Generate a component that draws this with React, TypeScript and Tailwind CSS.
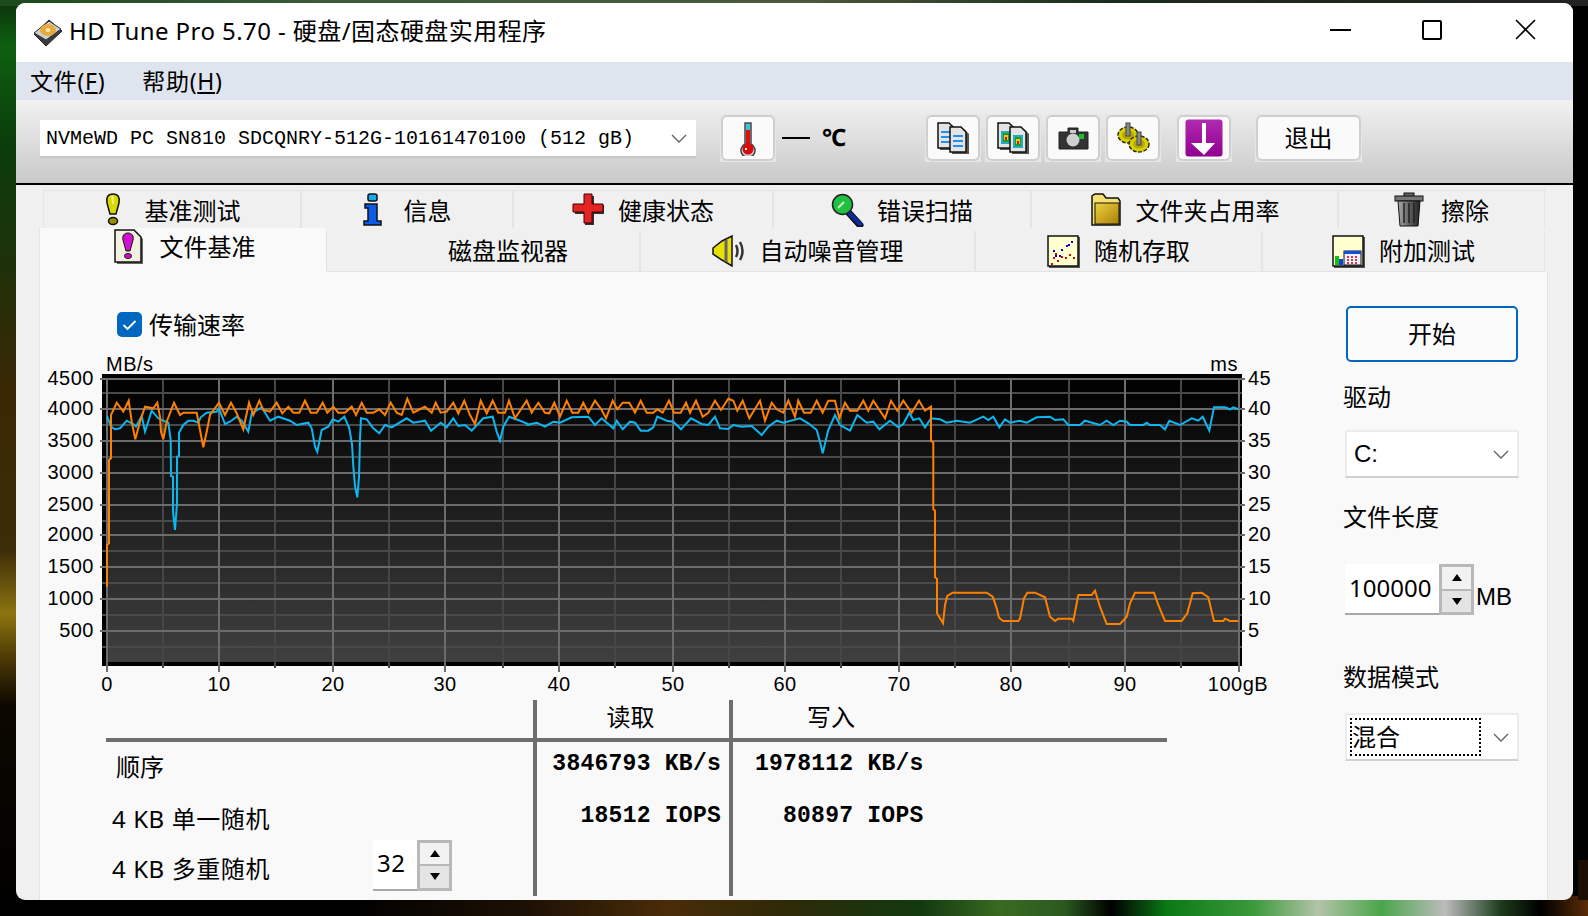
import React from 'react';

const CJK = "font-['Noto_Sans','Noto_Sans_CJK_SC',sans-serif]";

// points read off the reference, in 3x crop coordinates
function toPts(ox: number, list: number[][]) {
  return list.map(([x, y]) => `${(ox + x / 3).toFixed(1)},${(350 + y / 3).toFixed(1)}`).join(' ');
}

const orange = [
  toPts(30, [[231,710],[231,585],[237,580],[237,330],[243,325],[243,195],[260,158],[280,185],[296,152],[305,215],[316,268],[330,215],[345,170],[370,175],[382,158],[390,200],[393,245],[400,268],[410,215],[432,158],[450,195],[460,188],[500,188],[510,240],[520,292],[530,245],[540,195],[567,158],[585,195],[603,158],[620,190],[640,238],[657,158],[670,195],[688,152],[700,180],[720,185],[740,158],[757,190],[775,170],[790,188],[808,188],[825,152],[842,188],[860,188],[878,158],[892,188],[910,170],[925,188],[945,188],[965,170],[978,195],[995,158],[1010,188],[1030,188],[1048,178],[1065,195],[1082,158],[1100,188],[1115,195],[1132,146],[1150,188],[1165,180],[1185,170],[1205,188],[1217,158],[1232,188],[1250,185],[1270,158],[1285,190],[1303,152],[1320,195],[1335,222],[1352,152],[1370,190],[1388,152],[1405,188],[1425,188],[1437,152],[1455,205],[1490,152],[1500,175]]),
  toPts(520, [[20,152],[35,188],[55,158],[75,188],[88,190],[103,158],[120,200],[140,152],[157,188],[175,188],[190,158],[205,188],[225,152],[245,180],[258,205],[278,152],[292,178],[308,158],[328,158],[345,188],[362,152],[380,188],[400,188],[412,178],[428,188],[447,152],[462,188],[482,188],[498,158],[510,188],[528,152],[548,200],[565,188],[585,152],[603,180],[625,146],[640,152],[652,182],[668,152],[688,205],[720,152],[735,212],[755,158],[770,178],[790,188],[805,152],[825,200],[835,152],[852,188],[872,188],[890,152],[908,188],[925,152],[945,152],[958,205],[975,158],[990,182],[1012,182],[1030,152],[1045,182],[1060,152],[1095,205],[1113,152],[1132,182],[1150,152],[1175,188],[1197,152],[1215,182],[1233,170],[1233,272],[1240,278],[1240,478],[1245,482],[1245,682],[1251,686],[1251,790],[1269,820],[1275,765],[1282,738],[1298,728],[1400,728],[1418,740],[1430,775],[1437,803],[1450,813],[1495,813]]),
  toPts(900, [[360,806],[372,745],[382,728],[405,728],[435,742],[450,800],[465,813],[475,806],[515,806],[520,813],[535,735],[575,735],[585,722],[600,770],[620,822],[660,822],[680,800],[690,760],[705,728],[762,728],[775,765],[795,813],[845,813],[862,790],[878,730],[905,728],[925,742],[942,813],[970,813],[975,806],[990,813],[1015,813]]),
].join(' ');

const blue = [
  toPts(30, [[231,198],[243,230],[255,238],[270,235],[290,212],[310,222],[318,230],[335,198],[345,245],[365,182],[385,205],[400,212],[415,218],[422,270],[423,378],[429,380],[429,485],[435,540],[441,460],[441,320],[447,318],[447,248],[460,225],[475,212],[490,212],[505,218],[512,202],[530,188],[560,185],[567,175],[585,222],[600,215],[620,200],[635,212],[655,245],[665,190],[695,172],[720,212],[745,200],[780,212],[800,225],[835,218],[845,235],[855,290],[862,305],[875,240],[895,230],[908,208],[925,215],[943,200],[958,235],[966,282],[970,348],[975,408],[982,442],[987,382],[990,265],[993,205],[1010,208],[1030,235],[1048,250],[1065,225],[1085,232],[1130,205],[1150,218],[1185,212],[1203,242],[1232,218],[1250,232],[1270,205],[1285,228],[1305,225],[1325,242],[1360,205],[1388,200],[1400,245],[1410,272],[1420,230],[1437,200],[1470,212],[1500,225]]),
  toPts(520, [[20,225],[50,218],[75,230],[100,215],[120,218],[155,202],[205,200],[225,225],[245,205],[280,235],[290,212],[308,238],[330,215],[345,218],[362,242],[385,242],[400,232],[412,200],[440,212],[460,215],[483,238],[513,205],[545,222],[565,225],[585,200],[600,235],[625,237],[640,225],[665,230],[695,228],[725,255],[745,230],[770,212],[790,218],[840,205],[865,220],[890,240],[900,275],[908,310],[925,240],[945,195],[960,225],[990,242],[1012,195],[1040,218],[1060,215],[1078,238],[1110,212],[1135,232],[1150,222],[1168,188],[1180,210],[1198,205],[1215,232],[1233,205],[1260,208],[1280,218],[1310,212],[1350,218],[1390,200],[1405,210],[1420,200],[1438,232],[1455,208],[1470,218],[1500,212]]),
  toPts(900, [[380,218],[410,202],[450,200],[465,210],[490,208],[505,225],[540,225],[555,212],[600,225],[620,212],[640,225],[660,212],[680,215],[690,225],[730,225],[740,218],[750,225],[780,225],[795,238],[808,212],[840,225],[875,205],[895,212],[908,200],[928,242],[942,172],[975,172],[990,178],[1000,172],[1015,178]]),
].join(' ');

const majorH = [379, 409, 441, 473, 505, 535, 567, 599, 631];
const minorH = [393, 425, 457, 489, 521, 551, 583, 615, 647];
const majorV = [107, 219, 333, 445, 559, 673, 785, 899, 1011, 1125, 1239];
const minorV = [163, 275, 389, 503, 615, 729, 841, 955, 1069, 1181];
const leftLabels = ['4500', '4000', '3500', '3000', '2500', '2000', '1500', '1000', '500'];
const rightLabels = ['45', '40', '35', '30', '25', '20', '15', '10', '5'];
const xLabels = ['0', '10', '20', '30', '40', '50', '60', '70', '80', '90'];

function Chart() {
  const t = "fill-black text-[20px] tracking-[0.5px] font-['Liberation_Sans',sans-serif]";
  return (
    <svg viewBox="40 345 1260 355" width={1260} height={355} className="block">
      <defs>
        <linearGradient id="plot" x1="0" y1="0" x2="0" y2="1">
          <stop offset="0" stopColor="#000" />
          <stop offset="1" stopColor="#404040" />
        </linearGradient>
      </defs>
      <rect x="102" y="374" width="1140" height="292" fill="#000" />
      <rect x="106" y="378" width="1134" height="284" fill="url(#plot)" />
      {minorH.map((y) => <line key={y} x1="102" x2="1242" y1={y} y2={y} stroke="#4a4a4a" strokeWidth="2" />)}
      {minorV.map((x) => <line key={x} x1={x} x2={x} y1="378" y2="668" stroke="#464646" strokeWidth="2" />)}
      {majorH.map((y) => <line key={y} x1="100" x2="1245" y1={y} y2={y} stroke="#6c6c6c" strokeWidth="2" />)}
      {majorV.map((x) => <line key={x} x1={x} x2={x} y1="378" y2="672" stroke="#6c6c6c" strokeWidth="2" />)}
      <polyline points={blue} fill="none" stroke="#0cb6f0" strokeWidth="2" />
      <polyline points={orange} fill="none" stroke="#ff8000" strokeWidth="2" />
      {leftLabels.map((l, i) => <text key={l} x="94" y={majorH[i] + 6} textAnchor="end" className={t}>{l}</text>)}
      {rightLabels.map((l, i) => <text key={l} x="1248" y={majorH[i] + 6} className={t}>{l}</text>)}
      {xLabels.map((l, i) => <text key={l} x={majorV[i]} y="691" textAnchor="middle" className={t}>{l}</text>)}
      <text x="1238" y="691" textAnchor="middle" className={t}>100gB</text>
      <text x="106" y="371" className={t}>MB/s</text>
      <text x="1238" y="371" textAnchor="end" className={t}>ms</text>
    </svg>
  );
}

function Wallpaper() {
  return (
    <svg className="absolute inset-0" width={1588} height={916}>
      <defs>
        <linearGradient id="wl" x1="0" y1="0" x2="0" y2="1">
          <stop offset="0" stopColor="#0c300c" />
          <stop offset="0.05" stopColor="#0e6010" />
          <stop offset="0.16" stopColor="#0a3c0a" />
          <stop offset="0.3" stopColor="#203008" />
          <stop offset="0.42" stopColor="#3a2805" />
          <stop offset="0.6" stopColor="#3c2c08" />
          <stop offset="0.67" stopColor="#8c7410" />
          <stop offset="0.72" stopColor="#4a3805" />
          <stop offset="0.77" stopColor="#0c0800" />
          <stop offset="1" stopColor="#000" />
        </linearGradient>
        <linearGradient id="wb" x1="0" y1="0" x2="1" y2="0">
          <stop offset="0" stopColor="#000" />
          <stop offset="0.22" stopColor="#000" />
          <stop offset="0.33" stopColor="#1c1004" />
          <stop offset="0.42" stopColor="#4a2c08" />
          <stop offset="0.5" stopColor="#2c2a08" />
          <stop offset="0.58" stopColor="#123a10" />
          <stop offset="0.63" stopColor="#3a6a20" />
          <stop offset="0.67" stopColor="#2a5a20" />
          <stop offset="0.7" stopColor="#000" />
          <stop offset="0.735" stopColor="#0a7a14" />
          <stop offset="0.79" stopColor="#3c9a3c" />
          <stop offset="0.83" stopColor="#b4c4a8" />
          <stop offset="0.87" stopColor="#4aa64a" />
          <stop offset="0.91" stopColor="#bcbcbc" />
          <stop offset="0.945" stopColor="#1c3c1c" />
          <stop offset="0.97" stopColor="#000" />
          <stop offset="1" stopColor="#5a2c08" />
        </linearGradient>
        <linearGradient id="wt" x1="0" y1="0" x2="1" y2="0">
          <stop offset="0" stopColor="#1c4a1c" />
          <stop offset="0.2" stopColor="#3a5a3a" />
          <stop offset="0.5" stopColor="#4c5a3c" />
          <stop offset="0.7" stopColor="#1c2c1c" />
          <stop offset="1" stopColor="#222" />
        </linearGradient>
      </defs>
      <rect width="1588" height="916" fill="#000" />
      <rect width="20" height="916" fill="url(#wl)" />
      <rect y="896" width="1588" height="20" fill="url(#wb)" />
      <rect width="1588" height="6" fill="url(#wt)" />
      <rect x="1578" y="860" width="10" height="40" fill="#1c0e03" />
    </svg>
  );
}

// ---- icons ----
function HddIcon() {
  return (
    <svg width="30" height="28" viewBox="0 0 30 28">
      <path d="M1 15 L16 1 L29 12 L13 27 Z" fill="#3c3c3c" stroke="#222" />
      <path d="M1 14 L16 2 L28 10 L13 21 Z" fill="#cfcfcf" stroke="#333" />
      <ellipse cx="15" cy="11" rx="8" ry="6" fill="#e8a93c" />
      <ellipse cx="15" cy="11" rx="2.5" ry="2" fill="#fbe6b0" />
    </svg>
  );
}
function Thermometer() {
  return (
    <svg width="18" height="35" viewBox="0 0 18 35">
      <path d="M6 2 h6 v21 a7 7 0 1 1 -6 0 Z" fill="#ccc" stroke="#444" strokeWidth="1.5" />
      <rect x="7" y="3" width="4" height="6" fill="#35c4d8" />
      <rect x="7" y="9" width="4" height="16" fill="#e01010" />
      <circle cx="9" cy="28" r="5.5" fill="#d80c0c" />
      <rect x="6" y="27" width="2" height="2" fill="#fff" />
    </svg>
  );
}
function Docs({ colored }: { colored?: boolean }) {
  const doc = (x: number, y: number, k: string) => (
    <g key={k}>
      <path d={`M${x + 2} ${y + 2} h12 l5 5 v20 h-17 Z`} fill="#555" />
      <path d={`M${x} ${y} h11 l5 5 v20 h-16 Z`} fill="#e4e4e4" stroke="#111" strokeWidth="1.5" />
      {colored ? (
        <g>
          <rect x={x + 3} y={y + 8} width="10" height="13" fill="#28a8c8" />
          <rect x={x + 5} y={y + 10} width="6" height="9" fill="#14a020" />
          <rect x={x + 6} y={y + 12} width="4" height="5" fill="#e8d000" />
          <rect x={x + 7} y={y + 14} width="2" height="3" fill="#d81010" />
        </g>
      ) : (
        <g fill="#1c90f4">
          <rect x={x + 3} y={y + 8} width="10" height="2" />
          <rect x={x + 3} y={y + 13} width="10" height="2" />
          <rect x={x + 3} y={y + 18} width="10" height="2" />
        </g>
      )}
    </g>
  );
  return (
    <svg width="32" height="32" viewBox="0 0 32 32">
      {doc(1, 1, 'a')}
      {doc(13, 5, 'b')}
    </svg>
  );
}
function Camera() {
  return (
    <svg width="31" height="24" viewBox="0 0 31 24">
      <path d="M10 6 V2 h10 v4 h10 v17 H1 V6 Z" fill="#333" stroke="#222" />
      <rect x="12" y="4" width="6" height="3" fill="#ccc" />
      <circle cx="15" cy="14" r="6.5" fill="#d0d0d0" />
      <rect x="21" y="8" width="5" height="5" fill="#18c030" />
    </svg>
  );
}
function Gears() {
  const g = (x: number, y: number) => (
    <g>
      <ellipse cx={x} cy={y} rx="10" ry="8" fill="#d8d000" stroke="#302c00" strokeWidth="1.5" strokeDasharray="4 1.5" />
      <ellipse cx={x} cy={y} rx="6" ry="4.5" fill="#b4a800" />
      <rect x={x - 2} y={y - 12} width="4" height="13" fill="#888" stroke="#444" />
    </g>
  );
  return (
    <svg width="34" height="32" viewBox="0 0 34 32">
      {g(12, 13)}
      {g(23, 22)}
    </svg>
  );
}
function PurpleDown() {
  return (
    <svg width="38" height="38" viewBox="0 0 38 38">
      <defs>
        <linearGradient id="pd" x1="0" y1="0" x2="0" y2="1">
          <stop offset="0" stopColor="#b02ab0" />
          <stop offset="1" stopColor="#900090" />
        </linearGradient>
      </defs>
      <rect x="0.5" y="0.5" width="37" height="37" rx="3" fill="url(#pd)" />
      <path d="M17 4 h4 v20 h9 L19 36 L6 24 h11 Z" fill="#fff" />
    </svg>
  );
}
function Exclaim({ color = '#d8d800' }: { color?: string }) {
  return (
    <svg width="18" height="33" viewBox="0 0 18 33">
      <path d="M9 1 C14 1 16 4 15 10 L12 21 H6 L3 10 C2 4 4 1 9 1 Z" fill={color} stroke="#111" strokeWidth="1.5" />
      <path d="M7 3 h3 v8 h-2 Z" fill="#fff" opacity=".5" />
      <ellipse cx="9" cy="28" rx="4.5" ry="3.5" fill="#9a9000" stroke="#111" strokeWidth="1.5" />
    </svg>
  );
}
function InfoIcon() {
  return (
    <svg width="20" height="33" viewBox="0 0 20 33">
      <rect x="5" y="1" width="9" height="7" rx="2" fill="#18a8f0" stroke="#111" strokeWidth="1.5" />
      <path d="M2 11 h12 v17 h4 v4 H1 v-4 h4 v-13 H2 Z" fill="#0a5ce8" stroke="#111" strokeWidth="1.5" />
    </svg>
  );
}
function CrossIcon() {
  return (
    <svg width="34" height="33" viewBox="0 0 34 33">
      <path d="M13 3 h9 v9 h10 v9 h-10 v11 h-9 v-11 h-10 v-9 h10 Z" fill="#333" />
      <path d="M12 1 h8 v10 h11 v8 h-11 v11 h-8 v-11 h-11 v-8 h11 Z" fill="#e42424" stroke="#400" />
    </svg>
  );
}
function Magnifier() {
  return (
    <svg width="34" height="34" viewBox="0 0 34 34">
      <path d="M18 20 L29 32" stroke="#111" strokeWidth="7" strokeLinecap="round" />
      <path d="M18 20 L29 31" stroke="#0c2aa0" strokeWidth="4.5" strokeLinecap="round" />
      <circle cx="11.5" cy="11.5" r="10" fill="#20c040" stroke="#222" strokeWidth="1.5" />
      <path d="M7 15 L13 9" stroke="#c8f8c8" strokeWidth="2" />
    </svg>
  );
}
function Folder() {
  return (
    <svg width="32" height="34" viewBox="0 0 32 34">
      <defs>
        <linearGradient id="fo" x1="0" y1="0" x2="1" y2="1">
          <stop offset="0" stopColor="#f0d040" />
          <stop offset="1" stopColor="#a88008" />
        </linearGradient>
      </defs>
      <path d="M2 6 V3 L5 1 h8 l3 4 h12 l2 3 v24 H2 Z" fill="#f4e070" stroke="#111" strokeWidth="1.5" />
      <rect x="5" y="10" width="24" height="21" fill="url(#fo)" stroke="#111" />
    </svg>
  );
}
function Trash() {
  return (
    <svg width="31" height="35" viewBox="0 0 31 35">
      <defs>
        <linearGradient id="tr" x1="0" y1="0" x2="1" y2="0">
          <stop offset="0" stopColor="#aaa" />
          <stop offset="0.6" stopColor="#555" />
          <stop offset="1" stopColor="#222" />
        </linearGradient>
      </defs>
      <rect x="10" y="1" width="10" height="4" fill="#666" stroke="#111" />
      <rect x="1" y="4" width="28" height="5" fill="#777" stroke="#111" />
      <path d="M4 9 h22 l-2 25 h-18 Z" fill="url(#tr)" stroke="#111" />
      <path d="M10 11 v20 M15 11 v20 M20 11 v20" stroke="#222" strokeWidth="1.5" />
    </svg>
  );
}
function FileExclaim() {
  return (
    <svg width="31" height="36" viewBox="0 0 31 36">
      <path d="M3 3 h19 l7 7 v25 H3 Z" fill="#666" />
      <path d="M1 1 h19 l7 7 v25 H1 Z" fill="#f2f0e0" stroke="#111" strokeWidth="1.5" />
      <path d="M14 4 C18 4 20 7 19 11 L16 22 h-4 L9 11 C8 7 10 4 14 4 Z" fill="#d010d0" stroke="#111" />
      <ellipse cx="14" cy="27" rx="3.5" ry="2.5" fill="#d010d0" stroke="#111" />
    </svg>
  );
}
function Speaker() {
  return (
    <svg width="36" height="32" viewBox="0 0 36 32">
      <path d="M1 13 L10 6 L20 1 V31 L10 25 L1 19 Z" fill="#e8e000" stroke="#111" strokeWidth="1.5" />
      <path d="M14 5 V27" stroke="#666" strokeWidth="3" />
      <path d="M24 10 Q27 16 24 22 M28 7 Q33 16 28 25" fill="none" stroke="#333" strokeWidth="2.5" />
    </svg>
  );
}
function Scatter() {
  const red = [[4, 28], [6, 22], [10, 25], [14, 21], [18, 22], [22, 19], [26, 22], [8, 18]];
  const bl = [[6, 15], [8, 20], [14, 14], [19, 10], [21, 9], [12, 20], [24, 6]];
  return (
    <svg width="33" height="33" viewBox="0 0 33 33">
      <rect x="2" y="2" width="31" height="31" fill="#555" />
      <rect x="1" y="1" width="30" height="30" fill="#ffffd0" stroke="#111" strokeWidth="1.5" />
      {red.map(([x, y], i) => <rect key={i} x={x} y={y} width="2" height="2" fill="#e00000" />)}
      {bl.map(([x, y], i) => <rect key={i} x={x} y={y} width="2" height="2" fill="#0000e0" />)}
    </svg>
  );
}
function BarsCalc() {
  return (
    <svg width="33" height="33" viewBox="0 0 33 33">
      <rect x="2" y="2" width="31" height="31" fill="#555" />
      <rect x="1" y="1" width="30" height="30" fill="#ffffd0" stroke="#111" strokeWidth="1.5" />
      <rect x="3" y="21" width="4" height="9" fill="#10c010" />
      <rect x="7" y="24" width="4" height="6" fill="#1040e0" />
      <rect x="12" y="16" width="17" height="14" fill="#f0f0ff" stroke="#111" />
      <rect x="12" y="16" width="17" height="3" fill="#1050e0" />
      <path d="M15 22 h2 M19 22 h2 M23 22 h2 M15 25 h2 M19 25 h2 M23 25 h2 M15 28 h2 M19 28 h2 M23 28 h2" stroke="#c00000" strokeWidth="1.5" />
    </svg>
  );
}

function ToolBtn({ w = 'w-[56px]', children }: { w?: string; children: React.ReactNode }) {
  return (
    <div className={`${w} h-[48px] p-[1px] bg-[#e6e6e6]`}>
      <div className="h-full rounded-[6px] border-2 border-[#cfcfcf] bg-[#fafafa] flex items-center justify-center">
        {children}
      </div>
    </div>
  );
}

function Chevron() {
  return (
    <svg width="16" height="9" viewBox="0 0 16 9" className="shrink-0">
      <path d="M1 1 L8 8 L15 1" fill="none" stroke="#606060" strokeWidth="1.3" />
    </svg>
  );
}

function Spinner({ value, w }: { value: string; w: string }) {
  return (
    <div className={`flex h-[51px] ${w} bg-white border-b-2 border-[#a8a8a8]`}>
      <div className="flex-1 flex items-center pl-[4px] pb-[2px] text-[24px] leading-none">{value}</div>
      <div className="w-[35px] -mb-[2px] bg-[#b8b8b8] p-[3px] flex flex-col gap-[2px]">
        <div className="flex-1 bg-[#f2f2f2] flex items-center justify-center">
          <div className="w-0 h-0 border-x-[5px] border-x-transparent border-b-[7px] border-b-black" />
        </div>
        <div className="flex-1 bg-[#e4e4e4] flex items-center justify-center">
          <div className="w-0 h-0 border-x-[5px] border-x-transparent border-t-[7px] border-t-black" />
        </div>
      </div>
    </div>
  );
}

const row1 = [
  { w: 'w-[258px]', gap: 'gap-[23px]', icon: <Exclaim />, label: '基准测试' },
  { w: 'w-[212px]', gap: 'gap-[21px]', icon: <InfoIcon />, label: '信息' },
  { w: 'w-[260px]', gap: 'gap-[12px]', icon: <CrossIcon />, label: '健康状态' },
  { w: 'w-[258px]', gap: 'gap-[12px]', icon: <Magnifier />, label: '错误扫描' },
  { w: 'w-[307px]', gap: 'gap-[14px]', icon: <Folder />, label: '文件夹占用率' },
  { w: 'w-[207px]', gap: 'gap-[16px]', icon: <Trash />, label: '擦除' },
];
const row2 = [
  { w: 'w-[314px] pl-[50px]', gap: '', icon: null, label: '磁盘监视器' },
  { w: 'w-[335px]', gap: 'gap-[12px]', icon: <Speaker />, label: '自动噪音管理' },
  { w: 'w-[287px]', gap: 'gap-[14px]', icon: <Scatter />, label: '随机存取' },
  { w: 'w-[283px]', gap: 'gap-[14px]', icon: <BarsCalc />, label: '附加测试' },
];

const valueFont = "font-['Liberation_Mono',monospace] font-bold text-[23px] tracking-[0.25px] leading-none";

export default function App() {
  return (
    <div className={`relative w-[1588px] h-[916px] overflow-hidden pt-[3px] pl-[16px] text-black ${CJK}`}>
      <Wallpaper />
      <div className="relative w-[1557px] h-[897px] rounded-[9px] overflow-hidden bg-[#f0f0f0] flex flex-col">
        {/* title bar */}
        <div className="h-[59px] bg-white flex items-center shrink-0">
          <div className="ml-[17px] mr-[6px]"><HddIcon /></div>
          <span className="text-[24px] leading-none -mt-[3px] tracking-[0.43px]">HD Tune Pro 5.70 - 硬盘/固态硬盘实用程序</span>
          <div className="ml-auto flex items-center mr-[37px] mb-[6px]">
            <div className="w-[21px] h-[2px] bg-black mr-[71px]" />
            <div className="w-[20px] h-[20px] border-2 border-black rounded-[2px] mr-[73px]" />
            <svg width="21" height="21" viewBox="0 0 21 21">
              <path d="M1 1 L20 20 M20 1 L1 20" stroke="#000" strokeWidth="1.6" />
            </svg>
          </div>
        </div>
        {/* menu */}
        <div className="h-[38px] bg-[#dee5ee] flex items-center text-[23px] shrink-0 pl-[14px] gap-[37px] tracking-[0.7px]">
          <span>文件(<span className="underline">F</span>)</span>
          <span>帮助(<span className="underline">H</span>)</span>
        </div>
        {/* toolbar */}
        <div className="h-[83px] bg-gradient-to-b from-[#f2f2f2] to-[#c9c9c9] flex items-center pl-[24px] shrink-0 pb-[7px]">
          <div className="w-[656px] h-[38px] mt-[2px] bg-white border-b-2 border-[#c8c8c8] flex items-center pl-[6px] pr-[9px] justify-between mr-[24px]">
            <span className="font-['Liberation_Mono',monospace] text-[20px] leading-none whitespace-pre pt-[1px]">NVMeWD PC SN810 SDCQNRY-512G-10161470100 (512 gB)</span>
            <Chevron />
          </div>
          <ToolBtn><Thermometer /></ToolBtn>
          <div className="w-[28px] h-[2px] bg-black ml-[6px] mr-[14px]" />
          <span className="text-[24px] font-bold leading-none w-[103px] -ml-[2px] mb-[2px]">℃</span>
          <div className="flex gap-[4px]">
            <ToolBtn><Docs /></ToolBtn>
            <ToolBtn><Docs colored /></ToolBtn>
            <ToolBtn><Camera /></ToolBtn>
            <ToolBtn><Gears /></ToolBtn>
          </div>
          <div className="ml-[15px]"><ToolBtn><PurpleDown /></ToolBtn></div>
          <div className="ml-[23px]"><ToolBtn w="w-[107px]"><span className="text-[24px] leading-none">退出</span></ToolBtn></div>
        </div>
        <div className="h-[2px] bg-black shrink-0" />
        {/* tabs */}
        <div className="pt-[5px] pl-[27px] shrink-0">
          <div className="flex h-[38px] text-[24px]">
            {row1.map((t) => (
              <div key={t.label} className={`${t.w} ${t.gap} bg-[#f0f0f0] border-x border-t border-[#e4e4e4] flex items-center justify-center`}>
                {t.icon}
                <span className="leading-none mt-[2px]">{t.label}</span>
              </div>
            ))}
          </div>
          <div className="flex h-[44px] -ml-[4px] items-end text-[24px]">
            <div className="w-[287px] h-[44px] bg-[#f9f9f9] flex items-start justify-center gap-[15px] pl-[3px] pt-[1px] relative z-10 border-l border-[#e4e4e4]">
              <FileExclaim />
              <span className="leading-none mt-[6px]">文件基准</span>
            </div>
            {row2.map((t) => (
              <div key={t.label} className={`${t.w} ${t.gap} h-[41px] bg-[#f0f0f0] border-x border-b border-[#e4e4e4] flex items-center justify-center`}>
                {t.icon}
                <span className="leading-none">{t.label}</span>
              </div>
            ))}
          </div>
        </div>
        {/* panel */}
        <div className="flex-1 ml-[23px] w-[1509px] bg-[#f9f9f9] border-l border-r border-[#e4e4e4] flex">
          <div className="w-[1304px] flex flex-col">
            <div className="h-[73px] pl-[77px] pt-[39px] flex items-start gap-[7px]">
              <div className="w-[25px] h-[25px] rounded-[5px] bg-[#0067c0] flex items-center justify-center mt-[1px]">
                <svg width="15" height="12" viewBox="0 0 15 12"><path d="M1.5 6 L5.5 10 L13.5 2" fill="none" stroke="#fff" strokeWidth="1.8" /></svg>
              </div>
              <span className="text-[24px] leading-[26px] mt-[1px]">传输速率</span>
            </div>
            <Chart />
            {/* results table */}
            <div className="ml-[66px] flex h-[196px]">
              <div className="w-[427px] flex flex-col">
                <div className="h-[42px] border-b-4 border-[#6e6e6e]" />
                <div className="h-[50px] flex items-center pl-[10px] text-[24px]">顺序</div>
                <div className="h-[52px] flex items-center pl-[6px] text-[24px] tracking-[0.6px] pt-[1px]">4 KB 单一随机</div>
                <div className="h-[52px] flex items-center pl-[6px] text-[24px] tracking-[0.6px]">
                  <span className="w-[261px] -mt-[2px]">4 KB 多重随机</span>
                  <div className="-mt-[10px]"><Spinner value="32" w="w-[79px]" /></div>
                </div>
              </div>
              <div className="w-[196px] border-l-4 border-[#6e6e6e] flex flex-col">
                <div className="h-[42px] border-b-4 border-[#6e6e6e] flex items-center justify-center text-[24px] leading-none pb-[5px] pr-[5px]">读取</div>
                <div className={`h-[40px] pt-[4px] flex items-center justify-end pr-[8px] ${valueFont}`}>3846793 KB/s</div>
                <div className={`h-[40px] pt-[4px] mt-[12px] flex items-center justify-end pr-[8px] ${valueFont}`}>18512 IOPS</div>
              </div>
              <div className="w-[438px] border-l-4 border-[#6e6e6e] flex flex-col">
                <div className="h-[42px] border-b-4 border-[#6e6e6e] flex items-center pl-[74px] text-[24px] leading-none pb-[5px]">写入</div>
                <div className={`h-[40px] pt-[4px] flex items-center pl-[22px] ${valueFont}`}>1978112 KB/s</div>
                <div className={`h-[40px] pt-[4px] mt-[12px] flex items-center pl-[50px] ${valueFont}`}>80897 IOPS</div>
              </div>
            </div>
          </div>
          {/* right column */}
          <div className="w-[177px] pt-[34px] flex flex-col text-[24px]">
            <div className="ml-[2px] w-[172px] h-[56px] rounded-[5px] border-2 border-[#0067c0] bg-[#fbfbfb] flex items-center justify-center leading-none pb-[1px]">开始</div>
            <div className="-ml-[1px] mt-[23px] leading-none">驱动</div>
            <div className="ml-[1px] mt-[21px] h-[48px] w-[174px] bg-white border-2 border-[#ececec] border-b-[#d0d0d0] flex items-center justify-between pl-[7px] pr-[8px]">
              <span className="font-['Liberation_Sans',sans-serif] leading-none">C:</span>
              <Chevron />
            </div>
            <div className="-ml-[1px] mt-[27px] leading-none">文件长度</div>
            <div className="ml-[1px] mt-[35px] flex items-end gap-[2px]">
              <Spinner value="100000" w="w-[129px]" />
              <span className="font-['Liberation_Sans',sans-serif] leading-none pb-[6px]">MB</span>
            </div>
            <div className="-ml-[1px] mt-[50px] leading-none">数据模式</div>
            <div className="ml-[1px] mt-[24px] h-[48px] w-[174px] bg-white border-2 border-[#ececec] border-b-[#d0d0d0] flex items-center justify-between pl-[3px] pr-[8px]">
              <span className="w-[131px] h-[38px] border-2 border-dotted border-black flex items-center leading-none">混合</span>
              <Chevron />
            </div>
          </div>
        </div>
      </div>
    </div>
  );
}
